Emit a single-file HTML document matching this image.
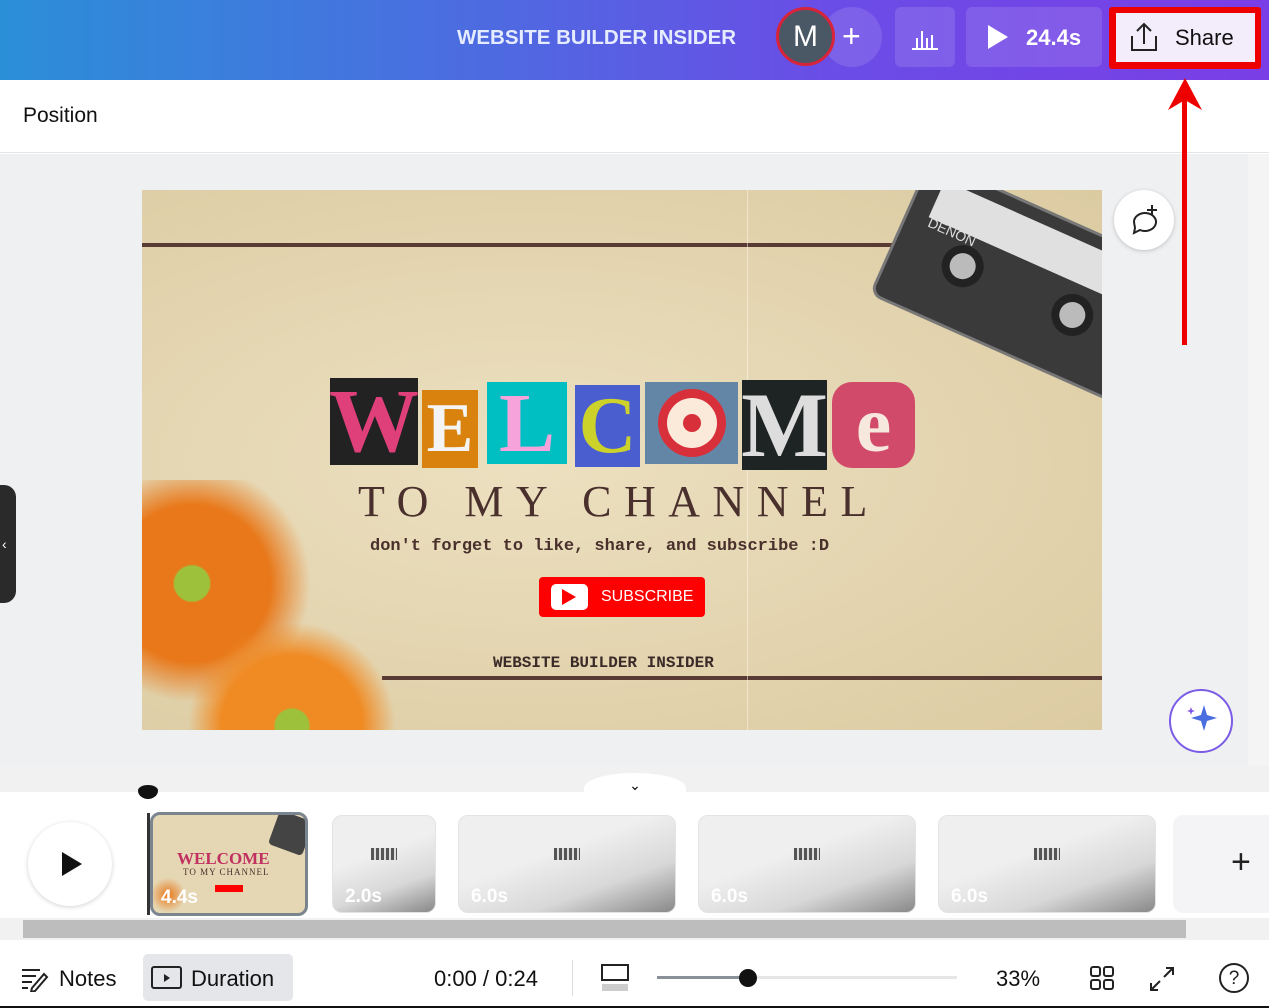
<!DOCTYPE html>
<html><head><meta charset="utf-8"><style>
*{margin:0;padding:0;box-sizing:border-box}
body{width:1269px;height:1008px;overflow:hidden;position:relative;font-family:"Liberation Sans",sans-serif;background:#fff}
.a{position:absolute}
.top{left:0;top:0;width:1269px;height:80px;background:linear-gradient(90deg,#2b8fd8 0%,#4a6ee0 35%,#6a4de6 65%,#7a3ee6 100%)}
.btn{position:absolute;top:7px;height:60px;border-radius:6px;background:rgba(255,255,255,.12)}
.let{position:absolute;display:flex;align-items:center;justify-content:center;font-family:"Liberation Serif",serif;font-weight:bold}
.th{position:absolute;top:815px;height:98px;border-radius:10px;background:linear-gradient(160deg,#efefef 40%,#d8d8d8 70%,#888 100%);border:1px solid #e3e3e3;overflow:hidden}
.th span{position:absolute;left:12px;bottom:4px;color:#fff;font-weight:bold;font-size:19px}
.th i{position:absolute;left:50%;top:32px;width:26px;height:12px;margin-left:-13px;background:repeating-linear-gradient(90deg,#555 0 3px,#ddd 3px 5px)}
</style></head><body>
<div class="a top"></div>
<div class="a" style="left:457px;top:26px;color:#e6ecff;font-weight:bold;font-size:20.5px">WEBSITE BUILDER INSIDER</div>
<div class="a" style="left:822px;top:7px;width:60px;height:60px;border-radius:50%;background:rgba(255,255,255,.12)"></div>
<div class="a" style="left:842px;top:18px;color:#fff;font-size:32px;line-height:36px">+</div>
<div class="a" style="left:776px;top:7px;width:59px;height:59px;border-radius:50%;background:#4a5866;border:3px solid #d7243a;color:#fff;font-size:30px;text-align:center;line-height:53px">M</div>
<div class="btn" style="left:895px;width:60px"><svg width="60" height="60"><path d="M17 42h26M22 42V31M27 42V24M32 42V31M37 42V28" stroke="#fff" stroke-width="2" fill="none"/></svg></div>
<div class="btn" style="left:966px;width:136px"><svg width="40" height="60" style="position:absolute;left:18px"><path d="M4 18l20 12-20 12z" fill="#fff"/></svg><span style="position:absolute;left:60px;top:18px;color:#fff;font-weight:bold;font-size:22px">24.4s</span></div>
<div class="a" style="left:1109px;top:7px;width:152px;height:62px;background:#e00;border-radius:3px"></div>
<div class="a" style="left:1116px;top:13px;width:139px;height:49px;background:#f3ecfb"></div>
<svg class="a" style="left:1128px;top:22px" width="34" height="32"><path d="M4 14v14h24V14M16 22V3M9 9l7-7 7 7" stroke="#222" stroke-width="2" fill="none"/></svg>
<div class="a" style="left:1175px;top:25px;font-size:22px;color:#111">Share</div>
<div class="a" style="left:0;top:80px;width:1269px;height:73px;background:#fff;border-bottom:1px solid #e4e4e4"></div>
<div class="a" style="left:23px;top:104px;font-size:21px;color:#111">Position</div>
<div class="a" style="left:0;top:154px;width:1248px;height:612px;background:#eff0f2"></div>
<div class="a" style="left:1248px;top:154px;width:21px;height:612px;background:#f4f4f4"></div>
<div class="a" style="left:0;top:485px;width:16px;height:118px;background:#2a2a2a;border-radius:0 12px 12px 0;color:#fff;font-size:14px;line-height:118px;padding-left:2px">‹</div>
<div class="a" style="left:142px;top:190px;width:960px;height:540px;background:radial-gradient(ellipse at 40% 50%,#ece0c0,#dccba2);overflow:hidden">
 <div class="a" style="left:0;top:53px;width:760px;height:4px;background:#5a3a34"></div>
 <div class="a" style="left:240px;top:486px;width:720px;height:4px;background:#5a3a34"></div>
 <div class="a" style="left:605px;top:0;width:1px;height:540px;background:rgba(255,250,235,.5)"></div>
 <div class="a" style="left:745px;top:20px;width:290px;height:150px;background:#3a3a3a;border-radius:12px;transform:rotate(24deg);border:3px solid #777">
  <div class="a" style="left:20px;top:12px;width:245px;height:40px;background:#e0e0e0"></div>
  <div class="a" style="left:50px;top:62px;width:42px;height:42px;border-radius:50%;background:#bbb;border:8px solid #222"></div>
  <div class="a" style="left:170px;top:62px;width:42px;height:42px;border-radius:50%;background:#bbb;border:8px solid #222"></div>
  <div class="a" style="left:22px;top:48px;color:#ddd;font-size:14px">DENON</div>
 </div>
 <div class="a" style="left:-30px;top:290px;width:200px;height:230px;background:radial-gradient(circle at 40% 45%,#9dc13a 0 10%,#e8781a 11% 45%,rgba(240,150,60,0) 68%)"></div>
 <div class="a" style="left:40px;top:410px;width:220px;height:180px;background:radial-gradient(circle at 50% 70%,#9dc13a 0 10%,#f08a22 11% 42%,rgba(240,150,60,0) 62%)"></div>
 <div class="a" style="left:216px;top:286px;white-space:nowrap;font-family:'Liberation Serif',serif;font-size:44px;letter-spacing:12.5px;color:#4a302c">TO MY CHANNEL</div>
 <div class="a" style="left:228px;top:347px;white-space:nowrap;font-family:'Liberation Mono',monospace;font-weight:bold;font-size:17px;color:#4a302c">don't forget to like, share, and subscribe :D</div>
 <div class="a" style="left:397px;top:387px;width:166px;height:40px;background:#f00;border-radius:4px"><div class="a" style="left:12px;top:7px;width:37px;height:26px;background:#fff;border-radius:5px"></div><svg class="a" style="left:22px;top:12px" width="16" height="16"><path d="M1 0l14 8-14 8z" fill="#f00"/></svg><span class="a" style="left:62px;top:11px;color:#fff;font-size:16px">SUBSCRIBE</span></div>
 <div class="a" style="left:351px;top:464px;white-space:nowrap;font-family:'Liberation Mono',monospace;font-weight:bold;font-size:16px;color:#3a2a28">WEBSITE BUILDER INSIDER</div>
</div>
<div class="let" style="left:330px;top:378px;width:88px;height:87px;background:#222;color:#e0407a;font-size:90px">W</div>
<div class="let" style="left:422px;top:390px;width:56px;height:78px;background:#d9820e;color:#f4f4f4;font-size:70px">E</div>
<div class="let" style="left:487px;top:382px;width:80px;height:82px;background:#00bfc2;color:#f7a3db;font-size:84px">L</div>
<div class="let" style="left:575px;top:385px;width:65px;height:82px;background:#4a5ed0;color:#cdd22a;font-size:80px">C</div>
<div class="let" style="left:645px;top:382px;width:93px;height:82px;background:#6486a6"><div style="width:68px;height:68px;border-radius:50%;background:#d8303a;display:flex;align-items:center;justify-content:center"><div style="width:50px;height:50px;border-radius:50%;background:#fbe9da;display:flex;align-items:center;justify-content:center"><div style="width:18px;height:18px;border-radius:50%;background:#d8303a"></div></div></div></div>
<div class="let" style="left:742px;top:380px;width:85px;height:90px;background:#1e2424;color:#ddd;font-size:92px">M</div>
<div class="let" style="left:832px;top:382px;width:83px;height:86px;background:#d24a6a;color:#f7e8de;font-size:80px;border-radius:20px">e</div>
<div class="a" style="left:1114px;top:190px;width:60px;height:60px;border-radius:50%;background:#fff;box-shadow:0 1px 4px rgba(0,0,0,.2)"><svg width="60" height="60"><path d="M20 32a11 9 0 1 1 6 8l-6 3 1-5z" stroke="#222" stroke-width="2" fill="none"/><path d="M38 15v10M33 20h10" stroke="#222" stroke-width="2"/></svg></div>
<div class="a" style="left:1169px;top:689px;width:64px;height:64px;border-radius:50%;background:#fff;border:2px solid #7a5ce6"><svg width="60" height="60"><path d="M33 14l3 10 10 3-10 3-3 10-3-10-10-3 10-3z" fill="#4a6ee0"/><path d="M20 16l1 3 3 1-3 1-1 3-1-3-3-1 3-1z" fill="#7a4ee6"/></svg></div>
<div class="a" style="left:1182px;top:100px;width:5px;height:245px;background:#e00"></div>
<svg class="a" style="left:1168px;top:78px" width="34" height="34"><path d="M17 0L34 32L17 22L0 32z" fill="#e00"/></svg>
<div class="a" style="left:0;top:766px;width:1269px;height:26px;background:#f1f1f1"></div>
<div class="a" style="left:584px;top:773px;width:102px;height:30px;border-radius:50% 50% 0 0;background:#fff;text-align:center;font-size:14px;padding-top:4px">⌄</div>
<div class="a" style="left:0;top:792px;width:1269px;height:126px;background:#fff"></div>
<div class="a" style="left:138px;top:785px;width:20px;height:14px;border-radius:50%/40% 40% 60% 60%;background:#111"></div>
<div class="a" style="left:28px;top:822px;width:84px;height:84px;border-radius:50%;background:#fff;box-shadow:0 1px 5px rgba(0,0,0,.18)"><svg width="84" height="84"><path d="M34 30l20 12-20 12z" fill="#111"/></svg></div>
<div class="a" style="left:147px;top:813px;width:3px;height:102px;background:#333"></div>
<div class="a" style="left:150px;top:812px;width:158px;height:104px;border:3px solid #7b8590;border-radius:10px;background:#e5d7b4;overflow:hidden">
 <div style="position:absolute;left:24px;top:34px;font-family:'Liberation Serif';font-weight:bold;font-size:17px;color:#c03060">WELCOME</div>
 <div style="position:absolute;left:30px;top:52px;font-family:'Liberation Serif';font-size:9px;color:#4a302c;letter-spacing:1px;white-space:nowrap">TO MY CHANNEL</div>
 <div style="position:absolute;left:62px;top:70px;width:28px;height:7px;background:#f00"></div>
 <div style="position:absolute;right:-4px;top:0;width:36px;height:36px;background:#444;border-radius:4px;transform:rotate(20deg)"></div>
 <div style="position:absolute;left:0;top:60px;width:30px;height:40px;background:radial-gradient(circle,#e8781a,rgba(0,0,0,0) 70%)"></div>
 <span style="position:absolute;left:8px;bottom:4px;color:#fff;font-weight:bold;font-size:19px">4.4s</span>
</div>
<div class="th" style="left:332px;width:104px"><i></i><span>2.0s</span></div>
<div class="th" style="left:458px;width:218px"><i></i><span>6.0s</span></div>
<div class="th" style="left:698px;width:218px"><i></i><span>6.0s</span></div>
<div class="th" style="left:938px;width:218px"><i></i><span>6.0s</span></div>
<div class="a" style="left:1173px;top:815px;width:96px;height:98px;border-radius:10px 0 0 10px;background:#f4f4f6"></div>
<div class="a" style="left:1231px;top:843px;font-size:34px;color:#222;font-weight:300">+</div>
<div class="a" style="left:0;top:918px;width:1269px;height:22px;background:#f1f1f1"></div>
<div class="a" style="left:23px;top:920px;width:1163px;height:18px;background:#bdbdbd"></div>
<div class="a" style="left:0;top:942px;width:1269px;height:66px;background:#fff;border-bottom:2px solid #111"></div>
<svg class="a" style="left:20px;top:966px" width="30" height="26"><path d="M2 4h18M2 10h14M2 16h10M2 22h6" stroke="#222" stroke-width="2"/><path d="M12 22l12-14 3 3-12 14-4 1z" stroke="#222" stroke-width="2" fill="none"/></svg>
<div class="a" style="left:59px;top:966px;font-size:22px;color:#111">Notes</div>
<div class="a" style="left:143px;top:954px;width:150px;height:47px;border-radius:5px;background:#e4e6ea"></div>
<svg class="a" style="left:151px;top:966px" width="32" height="24"><rect x="1" y="1" width="29" height="21" rx="2" stroke="#222" stroke-width="2" fill="none"/><path d="M13 8l6 4-6 4z" fill="#222"/></svg>
<div class="a" style="left:191px;top:966px;font-size:22px;color:#111">Duration</div>
<div class="a" style="left:434px;top:966px;font-size:22px;color:#111">0:00 / 0:24</div>
<div class="a" style="left:572px;top:960px;width:1px;height:36px;background:#ddd"></div>
<svg class="a" style="left:600px;top:964px" width="30" height="28"><rect x="2" y="1" width="26" height="15" stroke="#222" stroke-width="2" fill="none"/><rect x="2" y="20" width="26" height="7" fill="#ccc"/></svg>
<div class="a" style="left:657px;top:976px;width:300px;height:3px;background:#e6e6e6"></div>
<div class="a" style="left:657px;top:976px;width:90px;height:3px;background:#8a9098"></div>
<div class="a" style="left:739px;top:969px;width:18px;height:18px;border-radius:50%;background:#111"></div>
<div class="a" style="left:996px;top:966px;font-size:22px;color:#111">33%</div>
<svg class="a" style="left:1089px;top:965px" width="26" height="26"><g stroke="#222" stroke-width="2" fill="none"><rect x="2" y="2" width="9" height="9" rx="2"/><rect x="15" y="2" width="9" height="9" rx="2"/><rect x="2" y="15" width="9" height="9" rx="2"/><rect x="15" y="15" width="9" height="9" rx="2"/></g></svg>
<svg class="a" style="left:1148px;top:965px" width="28" height="28"><path d="M16 12l9-9M18 3h7v7M12 16l-9 9M3 18v7h7" stroke="#222" stroke-width="2" fill="none"/></svg>
<div class="a" style="left:1219px;top:963px;width:30px;height:30px;border-radius:50%;border:2px solid #222;text-align:center;font-size:19px;line-height:27px;color:#222">?</div>
</body></html>
